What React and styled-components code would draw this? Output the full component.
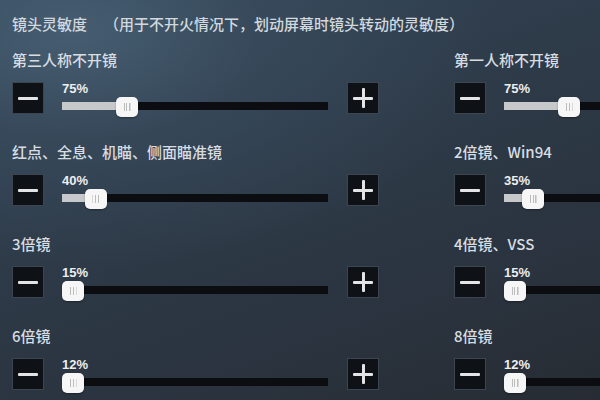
import React from "react";
import styled, { createGlobalStyle } from "styled-components";

const GlobalStyle = createGlobalStyle`
  html, body {
    margin: 0;
    padding: 0;
    width: 600px;
    height: 400px;
    overflow: hidden;
  }
  body {
    font-family: "Noto Sans CJK SC", "Noto Sans", sans-serif;
  }
  * {
    box-sizing: border-box;
  }
`;

const settings = [
  { label: "第三人称不开镜", value: 75 },
  { label: "第一人称不开镜", value: 75 },
  { label: "红点、全息、机瞄、侧面瞄准镜", value: 40 },
  { label: "2倍镜、Win94", value: 35 },
  { label: "3倍镜", value: 15 },
  { label: "4倍镜、VSS", value: 15 },
  { label: "6倍镜", value: 12 },
  { label: "8倍镜", value: 12 },
];

const THUMB_W = 22;

// thumb centre along the track, in px
function thumbCenter(value) {
  return Math.max(THUMB_W / 2, value * 0.9 - 2.5);
}

function Slider({ value }) {
  const center = thumbCenter(value);
  return (
    <SliderArea>
      <Percent>{value}%</Percent>
      <Track>
        <Fill style={{ width: center }} />
      </Track>
      <Thumb style={{ left: center - THUMB_W / 2 }} />
    </SliderArea>
  );
}

function Setting({ label, value }) {
  return (
    <SettingBox>
      <Label>{label}</Label>
      <Controls>
        <StepButton>
          <Bar />
        </StepButton>
        <Slider value={value} />
        <StepButton>
          <Bar />
          <Bar $vertical />
        </StepButton>
      </Controls>
    </SettingBox>
  );
}

export default function App() {
  return (
    <Page>
      <GlobalStyle />
      <Title>
        镜头灵敏度
        <Hint>（用于不开火情况下，划动屏幕时镜头转动的灵敏度）</Hint>
      </Title>
      <Grid>
        {settings.map((s) => (
          <Setting key={s.label} label={s.label} value={s.value} />
        ))}
      </Grid>
    </Page>
  );
}

const Page = styled.div`
  width: 600px;
  height: 400px;
  overflow: hidden;
  padding: 14px 0 0 12px;
  background:
    radial-gradient(ellipse 70% 60% at 12% 8%, rgba(72, 96, 116, 0.9) 0%, rgba(60, 80, 98, 0.5) 45%, rgba(50, 64, 78, 0) 100%),
    linear-gradient(160deg, #34475a 0%, #2e3b49 40%, #2a333e 75%, #272c33 100%);
  color: #d6dbe0;
`;

const Title = styled.div`
  font-size: 15px;
  font-weight: 500;
  line-height: 20px;
  color: #d2d8de;
  white-space: nowrap;
  margin-bottom: 16px;
`;

const Hint = styled.span`
  margin-left: 17px;
`;

const Grid = styled.div`
  display: grid;
  grid-template-columns: 367px 367px;
  column-gap: 75px;
  row-gap: 28px;
`;

const SettingBox = styled.div`
  display: flex;
  flex-direction: column;
  gap: 12px;
`;

const Label = styled.div`
  font-size: 15px;
  font-weight: 500;
  line-height: 20px;
  color: #d8dde2;
  white-space: nowrap;
`;

const Controls = styled.div`
  display: flex;
  align-items: center;
  height: 32px;
`;

const StepButton = styled.div`
  position: relative;
  flex: none;
  width: 32px;
  height: 32px;
  background: #0e1115;
  border: 1px solid #3d4550;
  display: flex;
  align-items: center;
  justify-content: center;
`;

const Bar = styled.span`
  position: absolute;
  background: #e2e4e6;
  border-radius: 1px;
  width: ${(p) => (p.$vertical ? "3px" : "20px")};
  height: ${(p) => (p.$vertical ? "20px" : "3px")};
`;

const SliderArea = styled.div`
  position: relative;
  flex: 1;
  height: 32px;
  margin: 0 19px 0 18px;
`;

const Percent = styled.div`
  font-family: "Liberation Sans", Arial, sans-serif;
  font-weight: bold;
  font-size: 13px;
  line-height: 14px;
  color: #eceef0;
`;

const Track = styled.div`
  position: absolute;
  left: 0;
  right: 0;
  top: 20px;
  height: 8px;
  background: #0b0d10;
`;

const Fill = styled.div`
  height: 100%;
  background: #c6c8ca;
`;

const Thumb = styled.div`
  position: absolute;
  top: 15px;
  width: ${THUMB_W}px;
  height: 20px;
  border-radius: 5px;
  background: #f6f6f6;
  box-shadow: 0 1px 2px rgba(0, 0, 0, 0.35);
  &::after {
    content: "";
    position: absolute;
    left: 50%;
    top: 6px;
    width: 7px;
    height: 8px;
    transform: translateX(-50%);
    background: repeating-linear-gradient(90deg, #bcbcbc 0 1px, transparent 1px 3px);
  }
`;
